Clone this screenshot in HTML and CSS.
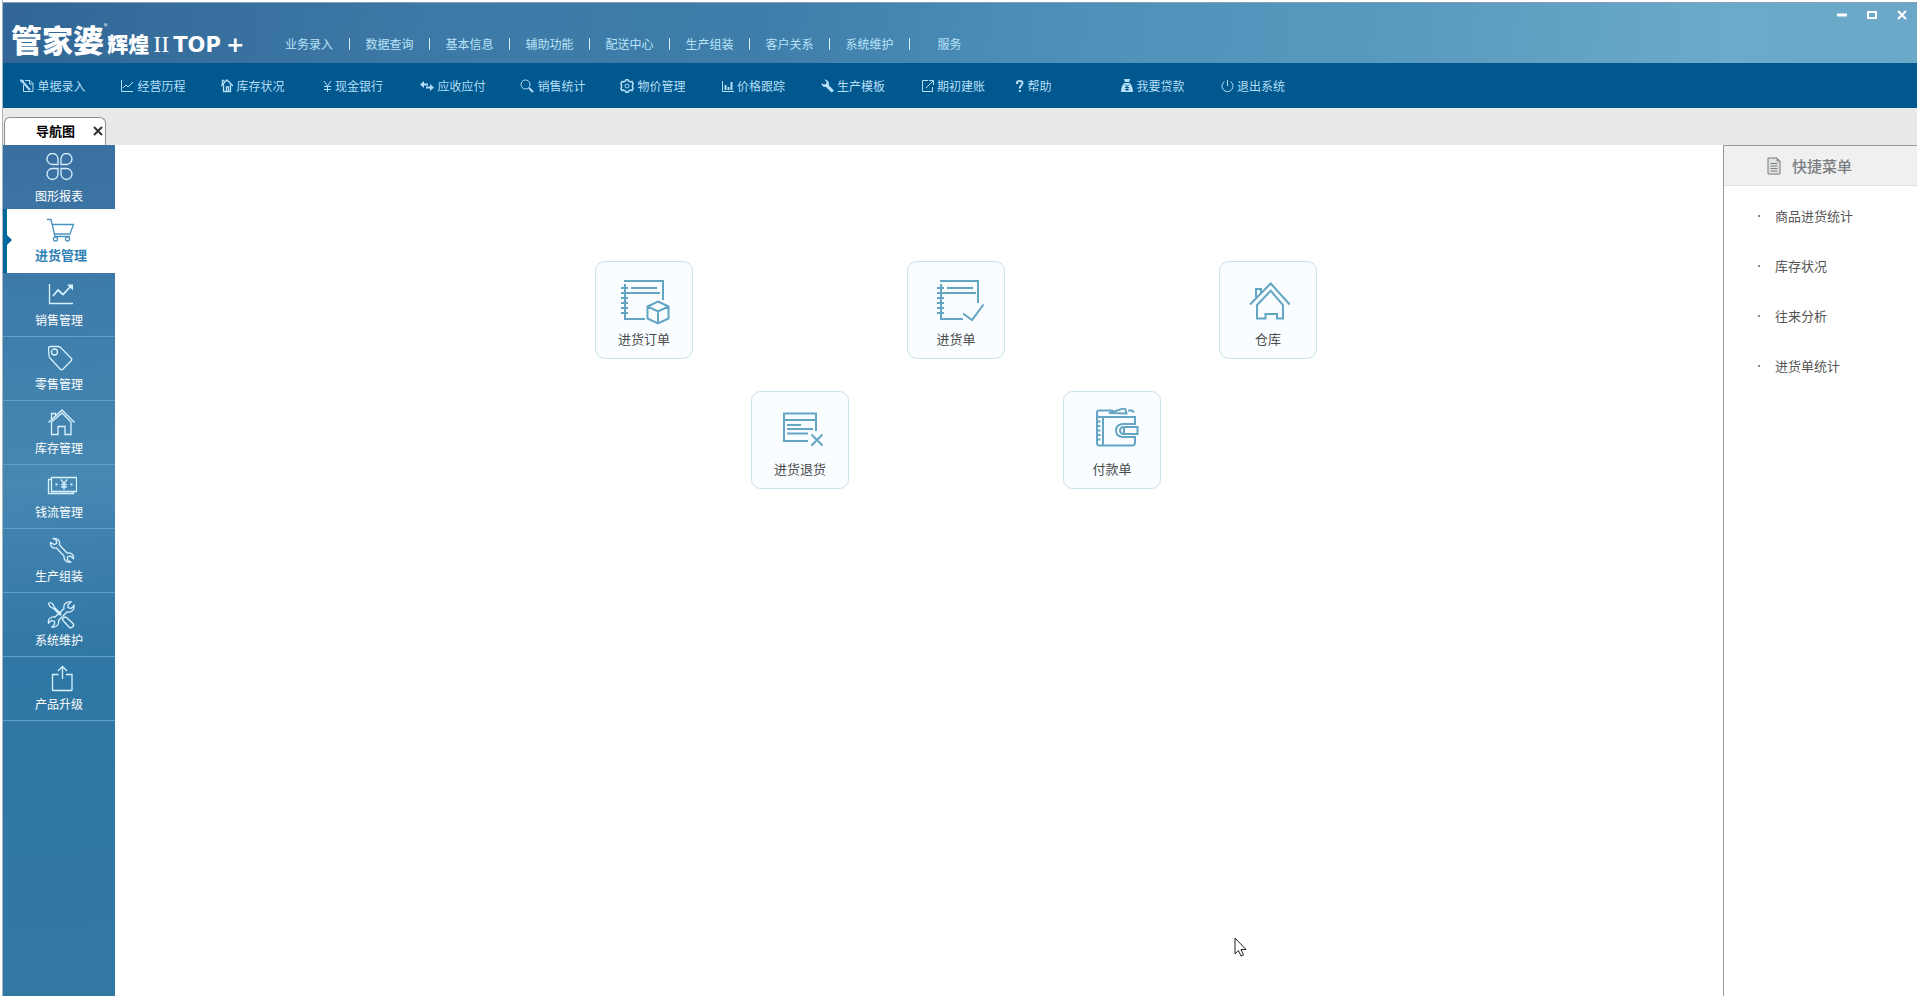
FILE: index.html
```html
<!DOCTYPE html>
<html lang="zh-CN">
<head>
<meta charset="utf-8">
<title>管家婆辉煌II TOP+</title>
<link rel="stylesheet" href="styles.css">
</head>
<body>
<div class="app">
  <header class="header">
    <h1 class="logo"><span class="logo-main">管家婆</span><sup class="logo-reg">®</sup><span class="logo-sub">辉煌</span><span class="logo-num">II</span><span class="logo-top">TOP</span><span class="logo-plus">+</span></h1>
    <nav class="menu" aria-label="主菜单">
      <a href="#">业务录入</a><a href="#">数据查询</a><a href="#">基本信息</a><a href="#">辅助功能</a><a href="#">配送中心</a><a href="#">生产组装</a><a href="#">客户关系</a><a href="#">系统维护</a><a href="#">服务</a>
    </nav>
    <div class="window-buttons">
      <button type="button" aria-label="最小化"><svg width="10" height="10"><path d="M0 5h10" stroke-width="3"/></svg></button>
      <button type="button" aria-label="最大化"><svg width="10" height="10"><path d="M1 2h8v6H1z" stroke-width="2"/></svg></button>
      <button type="button" aria-label="关闭"><svg width="10" height="10"><path d="M1 1l8 8M9 1l-8 8" stroke-width="2"/></svg></button>
    </div>
  </header>

  <nav class="toolbar" aria-label="工具栏">
    <a href="#"><svg width="14" height="14"><path d="M5 1.500h5l3 3v8H3.500V6M9.500 1.500v3.500H13"/><path d="M0 1.500l4 1M1 1l9 10" stroke-width="2"/></svg>单据录入</a>
    <a href="#"><svg width="14" height="14"><path d="M1.500 1v11.500H13M3 9l3-3 2 2 5-5"/></svg>经营历程</a>
    <a href="#"><svg width="12" height="14"><path d="M0 7l6-6 6 6M2.500 5.500v7h7v-7M1.500 5V1.500h2M5.500 12V8h2v4" stroke-width="1.300"/></svg>库存状况</a>
    <a href="#"><svg width="9" height="14"><path d="M1 2l3.500 5L8 2M4.500 7v6M1 7.500h7M1 10.500h7"/></svg>现金银行</a>
    <a href="#"><svg width="14" height="14"><path d="M3 5.500h5M6 8.500h5" stroke-width="2"/><path class="solid" d="M0 5.500l4-3.500v7zM14 8.500L10 5v7z"/></svg>应收应付</a>
    <a href="#"><svg width="14" height="14"><circle cx="5.500" cy="5.500" r="4.500"/><path d="M9 9l4 4" stroke-width="2"/></svg>销售统计</a>
    <a href="#"><svg width="14" height="14"><path stroke-width="1.500" d="M5.500 2L6 .8h2L8.500 2l2 1 1.500-.5 1.200 2L12.500 6v2l.7 1.500-1.200 2-1.500-.5-2 1L8 13.200H6L5.500 12l-2-1-1.500.5-1.200-2L1.500 8V6L.8 4.500 2 2.500l1.500.5z"/><circle cx="7" cy="7" r="2"/></svg>物价管理</a>
    <a href="#"><svg width="13" height="14"><path d="M1.500 2v10.500H13"/><path d="M4.500 6v5M7.500 8v3M10.500 3v8" stroke-width="2"/></svg>价格跟踪</a>
    <a href="#"><svg width="13" height="14"><path class="solid" d="M3.500.5l2 2.500-.5 2-2 .5L.5 4c0 3 2 4.500 4.500 4l5 5c1 1 3-.5 2.500-2L8 6.500C8.500 3 6.500.5 3.500.5z"/></svg>生产模板</a>
    <a href="#"><svg width="13" height="14"><path d="M7 1.500H1.500v11h10V8M5 9l7-7M8 1.500h4.500V6"/></svg>期初建账</a>
    <a class="narrow" href="#"><svg width="8" height="14"><path d="M1 5V3.500C1.500 1.500 6.500 1.500 6.500 4S3.800 6 3.800 9.500M3.800 11v2" stroke-width="2"/></svg>帮助</a>
    <a class="spaced" href="#"><svg width="12" height="14"><path class="solid" d="M3 0h6L8 3.500c2.500 1.500 4 5 4 9.500H0c0-4.500 1.500-8 4-9.500z"/><path class="cut" d="M3.500 3.500h5M4 5.500l2 2 2-2M6 7.500V12M4 8.500h4M4 10.500h4"/></svg>我要贷款</a>
    <a href="#"><svg width="13" height="14"><path d="M3.500 2.500a5.500 5.500 0 1 0 6 0M6.500 1v6"/></svg>退出系统</a>
  </nav>

  <div class="tabs">
    <div class="tab"><span>导航图</span><button type="button" aria-label="关闭标签"><svg width="10" height="10"><path d="M1 1l8 8M9 1l-8 8"/></svg></button></div>
  </div>

  <div class="body">
    <nav class="sidebar" aria-label="模块">
      <a class="first" href="#"><svg viewBox="-2 0 36 28"><path d="M15 11.500H9.500A5.500 5.500 0 1 1 15 6zM18 11.500V6a5.500 5.500 0 1 1 5.500 5.500zM15 15.500V21a5.500 5.500 0 1 1-5.500-5.500zM18 15.500h5.500A5.500 5.500 0 1 1 18 21z"/></svg>图形报表</a>
      <a class="active" href="#" aria-current="page"><svg viewBox="0 0 36 28"><path d="M4 2.500h4l4 17h15M9 7.500h21.500l-3.500 9.500H11.500"/><circle cx="12.500" cy="22" r="2"/><circle cx="24.500" cy="22" r="2"/></svg>进货管理</a>
      <a href="#"><svg viewBox="-2 0 36 28"><path d="M6.500 3v19.500H30"/><path d="M10 15l5-6 5 4.500L28 5" stroke-width="1.700"/><path class="solid" d="M24 3.500h6v6z"/></svg>销售管理</a>
      <a href="#"><svg viewBox="-2 0 36 28"><path d="M7.500 1.500H15q1.500 0 2.500 1L28 13q1.500 1.500 0 3l-8 8q-1.500 1.500-3 0L7 13q-1-1-1-2.500L5.500 3.500q0-2 2-2z"/><circle cx="11.500" cy="7" r="3"/></svg>零售管理</a>
      <a href="#"><svg viewBox="-2 0 36 28"><path d="M5.500 13.500L19 1l12.500 12.500M8.500 13v12.500H15V17.500h7v8h6V13L19 4 8.500 13M8.500 10V4.500h4V7"/></svg>库存管理</a>
      <a href="#"><svg viewBox="-2 0 36 28"><path d="M8.500 4.500h25v14h-25zM8.500 6.500h-3v14h25v-2"/><path d="M18 6.500l3 4 3-4M21 10.500v6M18 11.500h6M18 14h6"/><path d="M12.500 11.500h2M27.500 11.500h2" stroke-width="2"/></svg>钱流管理</a>
      <a href="#"><svg viewBox="-2 0 36 28"><path d="M10.500 1.500c4-.5 7 2.500 6 6.500l7.500 8c4-1 7 2 6.500 5.500l-3.500-2.500-2.500 1v3l3 2c-4 1-7-2-6.500-6l-7.500-8c-4 1-6.500-2-6-5.500l3.500 2 2.500-1V3.500z"/></svg>生产组装</a>
      <a href="#"><svg viewBox="-2 0 36 28"><path d="M6.500 1.500l3 1 2 4 7 7M6.500 1.500L5.500 3l2 3 3 1.500 7 7M21 16.500q1-1 2.500 0l6.500 6q1.500 2-.5 3.500t-3.500 0l-6-6.500q-1-1.500 1-3z"/><path d="M28 1c-4.500-1-8 2-7 6.500L12 16c-4-1-7.500 2-6.500 6l3-2.500 3 1v3l-2.500 2.500c4 1 7.500-2.500 6.500-6.500L24 11c4.500 1 7.500-2.500 7-6.500L28 7.500l-3-1v-3z"/></svg>系统维护</a>
      <a href="#"><svg viewBox="-2 0 36 28"><path d="M15.500 9.500h-6v15.500q0 .5.500.5h18.500q.5 0 .5-.5V9.500h-6M19.500 14V1.500M15 6l4.500-4.500L24 6"/></svg>产品升级</a>
    </nav>

    <main class="canvas">
      <div class="flow">
        <a class="card c1" href="#"><svg viewBox="21 17 56 48"><path d="M29 20h39v19M30 23v35h20M26 27h7M26 32h39M26 37h7M26 42h7M26 47h7M26 52h7M36 27h26M63 40.500l10.500 5v12l-10.500 5-10.500-5v-12zM52.500 45.500l10.500 5 10.500-5M63 50.500v12"/></svg>进货订单</a>
        <a class="card c3" href="#"><svg viewBox="21 17 56 48"><path d="M33 20h38v22M34 23v35h22M30 27h7M30 32h39M30 37h7M30 42h7M30 47h7M30 52h7M40 27h26M56 52.500l9 6.500 11.500-15.500"/></svg>进货单</a>
        <a class="card c5" href="#"><svg viewBox="21 17 56 48"><path d="M31 43.500l20.700-21 19 21M38 57.500V44l13.700-14.300L64 44v13.500h-6V53H46.500v4.500zM37 36v-8h5v4"/></svg>仓库</a>
        <a class="card c2" href="#"><svg viewBox="21 17 56 48"><path d="M57 50H33V22.500h32V40M33 29h32M36 34h14M36 38h26M36 42.500h21M60.500 43.500l11 11M71.500 43.500l-11 11"/></svg>进货退货</a>
        <a class="card c4" href="#"><svg viewBox="21 17 56 48"><path d="M50 19.500H36q-2 0-2 2V52q0 2.500 2.500 2.500H69q3 0 3-3V46H59q-6-1-6-6.500t6-6.500h13v-7H36q-2 0-2-2.500M40 26v28M34 30.500h3.500M34 35h3.500M34 39.500h3.500M34 44h3.500M34 48.500h3.500M74.500 36H60.500a3.500 3.500 0 0 0 0 7h14zM61 36v7"/><path d="M46 22l16-5 1.500 5.500zM65 19.500h4l2 2"/></svg>付款单</a>
      </div>
      <svg class="pointer" width="14" height="20" viewBox="0 0 14 20"><path d="M1 1v16l3.500-3.500 2.500 5.500 2.500-1-2.500-5.500h5z"/></svg>
    </main>

    <aside class="quick">
      <h2><svg width="14" height="18" viewBox="0 0 14 18"><path class="page" d="M1 1h9l3 3v13H1z"/><path d="M10 1v3h3M3.500 6.500h7M3.500 9h7M3.500 11.500h7M3.500 14h7"/></svg>快捷菜单</h2>
      <ul>
        <li><a href="#">商品进货统计</a></li>
        <li><a href="#">库存状况</a></li>
        <li><a href="#">往来分析</a></li>
        <li><a href="#">进货单统计</a></li>
      </ul>
    </aside>
  </div>
</div>
</body>
</html>
```
FILE: styles.css
```css
* { box-sizing: border-box; }

body {
  margin: 0;
  background: #fff;
  font: 12px/16px "Noto Sans CJK SC", sans-serif;
}

a { color: inherit; text-decoration: none; }
svg { flex: none; fill: none; stroke: currentColor; }
button { padding: 0; border: 0; background: none; color: inherit; display: flex; }
.solid { fill: currentColor; stroke: none; }

.app {
  min-height: 100vh;
  display: flex;
  flex-direction: column;
  margin-left: 2px;
  margin-right: 1px;
  padding-top: 2px;
  border-left: 1px solid #a9b4bd;
}

/* header */
.header {
  display: flex;
  height: 61px;
  border-top: 1px solid #8b9db3;
  background: linear-gradient(95deg, #316696 0%, #3d79a6 22%, #3f7eaa 40%, #4c90b9 55%, #5a9bbf 75%, #6baacb 90%, #6ba8c8 100%);
  color: #b9e3f8;
}

.logo {
  flex: none;
  display: flex;
  align-items: baseline;
  width: 266px;
  margin: 0;
  padding: 16px 0 0 8px;
  color: #fff;
  font-size: 31px;
  line-height: 40px;
  font-weight: 900;
  white-space: nowrap;
}

.logo-reg { align-self: flex-start; font-size: 7px; line-height: 14px; font-weight: 400; }
.logo-sub { font-size: 21px; }
.logo-num { margin: 0 4px; font: 400 24px/24px "Liberation Serif", serif; }
.logo-top { font: 700 21px/24px "DejaVu Sans", sans-serif; }
.logo-plus { margin-left: 5px; font: 700 22px/24px "DejaVu Sans", sans-serif; }

.menu { display: flex; align-items: flex-start; padding-top: 35px; }
.menu a {
  width: 80px;
  line-height: 12px;
  text-align: center;
}
.menu a + a { border-left: 1px solid #d5effb; }

.window-buttons { display: flex; align-items: flex-start; gap: 20px; margin-left: auto; padding: 7px 10px; color: #fff; }

/* toolbar */
.toolbar { display: flex; height: 45px; background: #00588e; color: #b5def7; }
.toolbar a {
  display: flex;
  align-items: center;
  justify-content: center;
  gap: 3px;
  width: 100px;
}
.toolbar .narrow { width: 62px; }
.toolbar .spaced { margin-left: 38px; }
.cut { stroke: #00588e; }

/* tabs */
.tabs { display: flex; align-items: flex-end; height: 37px; padding-left: 1px; background: #e9e9e9; }
.tab {
  display: flex;
  align-items: center;
  justify-content: space-between;
  width: 102px;
  height: 28px;
  padding: 0 2px 2px 31px;
  border: 1px solid #8f8f8f;
  border-bottom: 0;
  border-radius: 6px 6px 0 0;
  background: #fff;
  color: #000;
  font-size: 13px;
  font-weight: 700;
}
.tab svg { stroke: #333; stroke-width: 2; }

.body { flex: 1; display: flex; }

/* sidebar */
.sidebar {
  flex: none;
  width: 112px;
  background: linear-gradient(175deg, #3a6fa0 0, #3d7ba8 150px, #4688b2 340px, #3a7dab 440px, #2f77a4 520px, #3179a3 100%);
  color: #fff;
}
.sidebar a {
  display: flex;
  flex-direction: column;
  align-items: center;
  gap: 3px;
  height: 64px;
  padding-top: 8px;
  border-bottom: 1px solid #62a0c8;
}
.sidebar svg { width: 36px; height: 28px; stroke: #d9f2ff; stroke-width: 1.3; }
.sidebar .solid { fill: #d9f2ff; stroke: none; }
.sidebar .first { gap: 7px; border-bottom: 0; }
.sidebar .active {
  position: relative;
  gap: 2px;
  border-bottom: 0;
  border-left: 4px solid #00689c;
  background: #fff;
  color: #2f82b4;
  font-size: 13px;
  font-weight: 700;
}
.sidebar .active svg { stroke: #4a94c0; }
.active::before {
  content: "";
  position: absolute;
  left: 0;
  top: 26px;
  border: 5px solid transparent;
  border-left-color: #00689c;
  border-right: 0;
}

/* flow chart */
.canvas { flex: 1; position: relative; padding: 116px 0 0 74px; }
.flow {
  display: grid;
  grid-template-columns: repeat(5, 98px);
  gap: 32px 58px;
  justify-content: center;
}
.card {
  display: flex;
  flex-direction: column;
  align-items: center;
  gap: 5px;
  height: 98px;
  padding-top: 16px;
  border: 1px solid #c6e1e8;
  border-radius: 10px;
  background: #f9fdff;
  color: #4c4c4c;
  font-size: 13px;
}
.card svg { width: 56px; height: 48px; stroke: #64a5c3; stroke-width: 2; }
.c1 { grid-area: 1 / 1; }
.c2 { grid-area: 2 / 2; }
.c3 { grid-area: 1 / 3; }
.c4 { grid-area: 2 / 4; }
.c5 { grid-area: 1 / 5; }
.pointer { position: absolute; right: 475px; bottom: 39px; }
.pointer path { fill: #fff; stroke: #222; }

/* quick menu */
.quick {
  flex: none;
  width: 194px;
  border-left: 1px solid #999;
  border-top: 1px solid #999;
  color: #555;
  font-size: 13px;
}
.quick h2 {
  display: flex;
  align-items: center;
  gap: 11px;
  height: 40px;
  margin: 0;
  padding-left: 43px;
  border-bottom: 1px solid #e0e0e0;
  background: #f0f0f0;
  color: #7a7e82;
  font-size: 15px;
  font-weight: 500;
}
.quick .page { fill: #e2e4e4; stroke: #777; }
.quick ul { margin: 0; padding: 5px 0 0 34px; list-style: none; }
.quick li { display: flex; align-items: center; gap: 15px; height: 50px; }
.quick li::before { content: ""; width: 2px; height: 2px; background: #888; }
```
